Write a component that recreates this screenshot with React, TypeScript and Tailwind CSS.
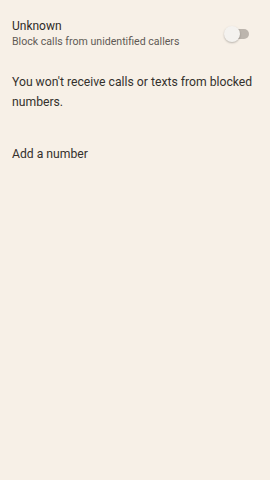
export default function App() {
  return (
    <div className="w-[270px] h-[480px] bg-[#f7f0e7] font-['Roboto','Noto_Sans',sans-serif]">
      <div className="flex items-center justify-between pl-3 pr-[21px] pt-[18px]">
        <div className="flex flex-col">
          <span className="text-[12px] leading-[16px] text-[#2f2b28]">Unknown</span>
          <span className="text-[10.6px] leading-[15px] text-[#5f5a55]">Block calls from unidentified callers</span>
        </div>
        <div className="relative w-[25px] h-[16px] flex items-center">
          <div className="absolute right-0 w-[20px] h-[10px] rounded-full bg-[#bcb5ad]" />
          <div className="absolute left-0 w-[16px] h-[16px] rounded-full bg-[#f4f2ef] shadow-[0_1px_2px_rgba(0,0,0,0.25)]" />
        </div>
      </div>
      <p className="pl-3 pr-2 pt-[23px] text-[12.2px] leading-[20px] text-[#34302d]">
        You won't receive calls or texts from blocked numbers.
      </p>
      <div className="pl-3 pt-[32px] text-[12.2px] leading-[20px] text-[#34302d]">Add a number</div>
    </div>
  );
}
